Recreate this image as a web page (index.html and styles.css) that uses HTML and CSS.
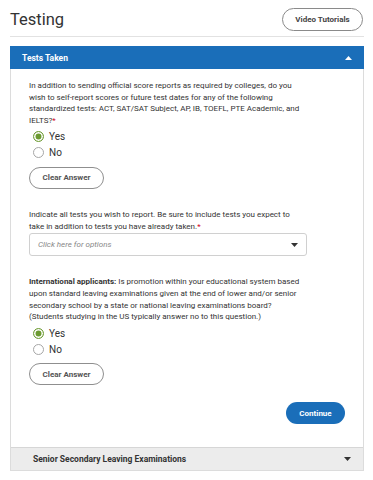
FILE: index.html
```html
<!DOCTYPE html>
<html lang="en">
<head>
<meta charset="utf-8">
<title>Testing</title>
<link rel="stylesheet" href="styles.css">
</head>
<body>
<div class="page">
  <header class="top">
    <h1 class="title">Testing</h1>
    <button class="pill" type="button">Video Tutorials</button>
  </header>

  <section class="panel">
    <div class="panel-head open">
      <span>Tests Taken</span>
      <svg class="caret" width="7" height="4" viewBox="0 0 7 4"><path d="M0 4 L3.5 0 L7 4 Z" fill="#fff"/></svg>
    </div>
    <div class="panel-body">
      <div class="q">
        <p class="q-text">In addition to sending official score reports as required by colleges, do you wish to self-report scores or future test dates for any of the following standardized tests: ACT, SAT/SAT Subject, AP, IB, TOEFL, PTE Academic, and IELTS?<span class="req">*</span></p>
        <div class="radios">
          <label class="radio"><span class="circle on"></span>Yes</label>
          <label class="radio"><span class="circle"></span>No</label>
        </div>
        <button class="clear" type="button">Clear Answer</button>
      </div>

      <div class="q">
        <p class="q-text">Indicate all tests you wish to report. Be sure to include tests you expect to take in addition to tests you have already taken.<span class="req">*</span></p>
        <div class="select">
          <span class="placeholder">Click here for options</span>
          <svg class="caret" width="7" height="4" viewBox="0 0 7 4"><path d="M0 0 L7 0 L3.5 4 Z" fill="#333"/></svg>
        </div>
      </div>

      <div class="q">
        <p class="q-text"><b>International applicants:</b> Is promotion within your educational system based upon standard leaving examinations given at the end of lower and/or senior secondary school by a state or national leaving examinations board? (Students studying in the US typically answer no to this question.)</p>
        <div class="radios">
          <label class="radio"><span class="circle on"></span>Yes</label>
          <label class="radio"><span class="circle"></span>No</label>
        </div>
        <button class="clear" type="button">Clear Answer</button>
      </div>

      <div class="actions">
        <button class="continue" type="button">Continue</button>
      </div>
    </div>
    <div class="panel-head closed">
      <span>Senior Secondary Leaving Examinations</span>
      <svg class="caret" width="7" height="4" viewBox="0 0 7 4"><path d="M0 0 L7 0 L3.5 4 Z" fill="#333"/></svg>
    </div>
  </section>
</div>
</body>
</html>
```

FILE: styles.css
```css
* { box-sizing: border-box; }
html, body { margin: 0; padding: 0; background: #fff; }
body {
  font-family: Roboto, "Liberation Sans", Arial, sans-serif;
  color: #333;
}
.page {
  padding: 0 9px 0 10px;
}
.top {
  display: flex;
  align-items: center;
  justify-content: space-between;
  height: 37px;
  border-bottom: 1px solid #e2e2e2;
  padding-top: 2px;
}
.title {
  margin: 0;
  font-size: 16.5px;
  font-weight: 400;
  color: #333;
}
.pill {
  width: 81px;
  height: 23px;
  border: 1px solid #8a8a8a;
  border-radius: 12px;
  background: #fff;
  font-family: inherit;
  font-size: 8px;
  font-weight: 700;
  color: #444;
  padding: 0;
  margin-right: 1px;
}
.panel {
  margin-top: 9px;
  border: 1px solid #dcdcdc;
  border-top: 0;
}
.panel-head {
  display: flex;
  align-items: center;
  justify-content: space-between;
  height: 23px;
  font-size: 8.5px;
  font-weight: 700;
}
.panel-head.open {
  background: #1a6eb9;
  color: #fff;
  padding: 0 12px 0 12px;
  margin: 0 -1px;
}
.panel-head.closed {
  background: #ececec;
  color: #333;
  border-top: 1px solid #d6d6d6;
  padding: 0 12px 0 22px;
}
.panel-body {
  padding: 11px 18px 23px 18px;
}
.q {
  max-width: 278px;
}
.q + .q { margin-top: 20px; }
.q-text {
  margin: 0;
  max-width: 275px;
  font-size: 8px;
  line-height: 11.7px;
  color: #333;
}
.req { color: #d0021b; }
.radios {
  display: flex;
  flex-direction: column;
  padding-left: 4px;
  margin-top: 2px;
}
.radio {
  display: flex;
  align-items: center;
  height: 16px;
  font-size: 10px;
  color: #333;
}
.circle {
  width: 11px;
  height: 11px;
  border-radius: 50%;
  border: 1px solid #a6a6a6;
  background: #fff;
  margin-right: 5px;
  flex: none;
}
.circle.on {
  border: 1.5px solid #6b9a30;
  box-shadow: inset 0 0 0 1.5px #fff, inset 0 0 0 6px #6b9a30;
}
.clear {
  display: block;
  margin-top: 6px;
  width: 75px;
  height: 22px;
  border: 1.2px solid #8f8f8f;
  border-radius: 11px;
  background: #fff;
  font-family: inherit;
  font-size: 8px;
  font-weight: 700;
  color: #555;
  padding: 0;
}
.select {
  margin-top: 1px;
  height: 23px;
  border: 1px solid #d0d0d0;
  border-radius: 3px;
  display: flex;
  align-items: center;
  justify-content: space-between;
  padding: 0 8px 0 8px;
}
.placeholder {
  font-size: 8px;
  font-style: italic;
  color: #888;
}
.actions {
  display: flex;
  justify-content: flex-end;
  margin-top: 17px;
}
.continue {
  width: 59px;
  height: 22px;
  border: 0;
  border-radius: 11px;
  background: #1a6eb9;
  color: #fff;
  font-family: inherit;
  font-size: 8px;
  font-weight: 700;
  padding: 0;
}
```
